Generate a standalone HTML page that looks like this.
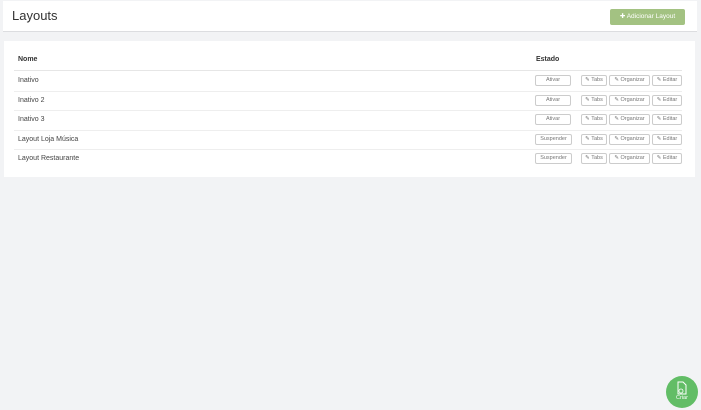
<!DOCTYPE html>
<html><head><style>
body{margin:0;width:701px;height:410px;background:#f2f3f5;font-family:"Liberation Sans",sans-serif;position:relative;overflow:hidden;color:#333}
.hdr{position:absolute;left:3px;top:1px;width:694px;height:30px;background:#fff;border-bottom:1px solid #dcdde0}
.hdr h1{margin:0;position:absolute;left:9px;top:7px;font-size:13px;font-weight:normal;color:#333}
.add{position:absolute;left:607px;top:8px;width:75px;height:16px;background:#a3c282;border-radius:2px;color:#fff;font-size:6.5px;line-height:16px;text-align:center}
.panel{position:absolute;left:4px;top:41px;width:691px;height:136px;background:#fff}
.th{position:absolute;top:15px;font-size:7px;font-weight:bold;color:#333}
.hl{position:absolute;left:10px;width:668px;top:29px;height:1px;background:#e6e6e6}
.row{position:absolute;left:10px;width:668px;height:19.6px;border-bottom:1px solid #eee;font-size:7px}
.row .n{position:absolute;left:4px;top:6px;color:#444}
.b{position:absolute;top:4px;border:1px solid #ccc;border-radius:2px;font-size:5.5px;line-height:9px;text-align:center;color:#777;box-sizing:border-box;height:11px}
.fab{position:absolute;left:666px;top:376px;width:32px;height:32px;border-radius:50%;background:#62bd66;color:#fff;font-size:5.5px;text-align:center}
</style></head><body>
<div class="hdr"><h1>Layouts</h1><div class="add">✚ Adicionar Layout</div></div>
<div class="panel">
<div class="th" style="left:14px">Nome</div><div class="th" style="left:532px">Estado</div>
<div class="hl"></div>
<div class="row" style="top:30px"><span class="n">Inativo</span><span class="b" style="left:521px;width:36px">Ativar</span><span class="b" style="left:567px;width:26px">✎ Tabs</span><span class="b" style="left:595px;width:41px">✎ Organizar</span><span class="b" style="left:638px;width:30px">✎ Editar</span></div>
<div class="row" style="top:49.6px"><span class="n">Inativo 2</span><span class="b" style="left:521px;width:36px">Ativar</span><span class="b" style="left:567px;width:26px">✎ Tabs</span><span class="b" style="left:595px;width:41px">✎ Organizar</span><span class="b" style="left:638px;width:30px">✎ Editar</span></div>
<div class="row" style="top:69.2px"><span class="n">Inativo 3</span><span class="b" style="left:521px;width:36px">Ativar</span><span class="b" style="left:567px;width:26px">✎ Tabs</span><span class="b" style="left:595px;width:41px">✎ Organizar</span><span class="b" style="left:638px;width:30px">✎ Editar</span></div>
<div class="row" style="top:88.8px"><span class="n">Layout Loja Música</span><span class="b" style="left:521px;width:37px">Suspender</span><span class="b" style="left:567px;width:26px">✎ Tabs</span><span class="b" style="left:595px;width:41px">✎ Organizar</span><span class="b" style="left:638px;width:30px">✎ Editar</span></div>
<div class="row" style="top:108.4px;border-bottom:none"><span class="n">Layout Restaurante</span><span class="b" style="left:521px;width:37px">Suspender</span><span class="b" style="left:567px;width:26px">✎ Tabs</span><span class="b" style="left:595px;width:41px">✎ Organizar</span><span class="b" style="left:638px;width:30px">✎ Editar</span></div>
</div>
<div class="fab"><svg width="12" height="14" viewBox="0 0 12 14" style="margin-top:5px"><path d="M2 1h5l3 3v9H2z" fill="none" stroke="#fff" stroke-width="1"/><circle cx="5" cy="10" r="2" fill="none" stroke="#fff" stroke-width=".8"/></svg><div style="margin-top:-2px">Criar</div></div>
</body></html>
